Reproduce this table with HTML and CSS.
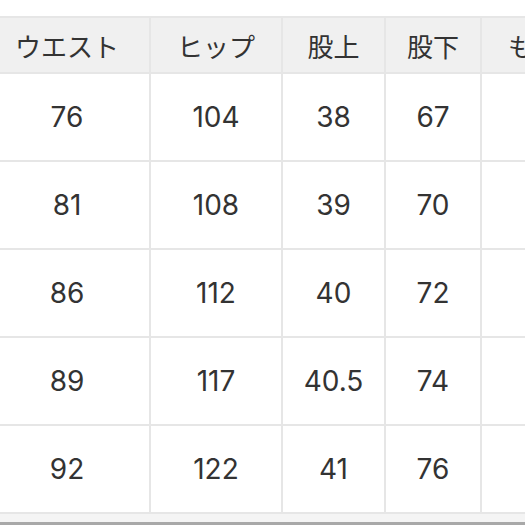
FILE: index.html
```html
<!DOCTYPE html>
<html lang="ja">
<head>
<meta charset="utf-8">
<link rel="stylesheet" href="styles.css">
</head>
<body>
<div class="page">
  <div class="table">
    <div class="cell head">ウエスト</div>
    <div class="cell head">ヒップ</div>
    <div class="cell head">股上</div>
    <div class="cell head">股下</div>
    <div class="cell head cut">もも周り</div>

    <div class="cell">76</div><div class="cell">104</div><div class="cell">38</div><div class="cell">67</div><div class="cell"></div>
    <div class="cell">81</div><div class="cell">108</div><div class="cell">39</div><div class="cell">70</div><div class="cell"></div>
    <div class="cell">86</div><div class="cell">112</div><div class="cell">40</div><div class="cell">72</div><div class="cell"></div>
    <div class="cell">89</div><div class="cell">117</div><div class="cell">40.5</div><div class="cell">74</div><div class="cell"></div>
    <div class="cell">92</div><div class="cell">122</div><div class="cell">41</div><div class="cell">76</div><div class="cell"></div>
  </div>
  <div class="footer-band"></div>
  <div class="footer-line"></div>
</div>
</body>
</html>
```

FILE: styles.css
```css
html, body {
  margin: 0;
  padding: 0;
  background: #ffffff;
  overflow: hidden;
}

.page {
  width: 525px;
  height: 525px;
  overflow: hidden;
  padding-top: 16px;
  box-sizing: border-box;
}

.table {
  display: grid;
  grid-template-columns: 164px 130px 101px 94px 160px;
  grid-template-rows: 54px repeat(5, 86px);
  gap: 2px;
  padding: 2px;
  background: #e6e6e6;
  margin-left: -17px;
  width: max-content;
}

.cell {
  background: #ffffff;
  display: flex;
  align-items: center;
  justify-content: center;
  font-family: "Inter", "Noto Sans CJK JP", sans-serif;
  font-size: 28px;
  color: #333333;
  white-space: nowrap;
  overflow: hidden;
}

.cell.head {
  background: #f0f0f0;
  font-family: "Noto Sans CJK JP", sans-serif;
  font-size: 26px;
  color: #333333;
}

.cell.cut {
  justify-content: flex-start;
  padding-left: 26px;
}

.footer-band {
  height: 8px;
  background: #f4f4f4;
}

.footer-line {
  height: 3px;
  background: #a8a8a8;
}
```
